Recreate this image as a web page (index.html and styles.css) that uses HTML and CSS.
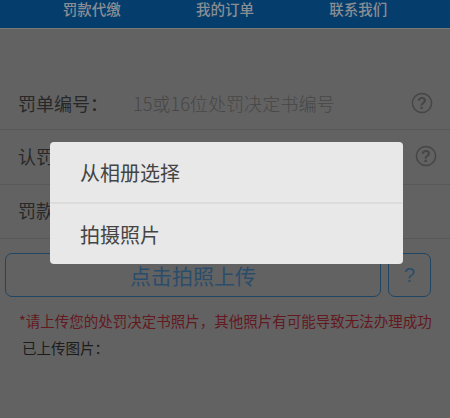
FILE: index.html
```html
<!DOCTYPE html>
<html lang="zh-CN">
<head>
<meta charset="utf-8">
<title>罚款代缴</title>
<link rel="stylesheet" href="styles.css">
</head>
<body>
<div class="page">
  <nav class="nav">
    <span class="nav-item">罚款代缴</span>
    <span class="nav-item">我的订单</span>
    <span class="nav-item">联系我们</span>
  </nav>
  <div class="form">
    <div class="row row-first">
      <span class="label">罚单编号：</span>
      <span class="placeholder">15或16位处罚决定书编号</span>
      <svg class="help" viewBox="0 0 22 22"><circle cx="11" cy="11" r="9.6"/><text x="11" y="16.5" text-anchor="middle" class="help-mark">?</text></svg>
    </div>
    <div class="row row-second">
      <span class="label">认罚人姓名：</span>
      <svg class="help" viewBox="0 0 22 22"><circle cx="11" cy="11" r="9.6"/><text x="11" y="16.5" text-anchor="middle" class="help-mark">?</text></svg>
    </div>
    <div class="row row-third">
      <span class="label">罚款金额：</span>
    </div>
  </div>
  <div class="actions">
    <div class="btn btn-main">点击拍照上传</div>
    <div class="btn btn-help">?</div>
  </div>
  <p class="warn">*请上传您的处罚决定书照片，其他照片有可能导致无法办理成功</p>
  <p class="uploaded">已上传图片：</p>
</div>
<div class="dialog">
  <div class="dialog-item">从相册选择</div>
  <div class="dialog-item dialog-item-last">拍摄照片</div>
</div>
</body>
</html>
```

FILE: styles.css
```css
* { box-sizing: border-box; }
html, body { margin: 0; padding: 0; }
body {
  width: 450px;
  height: 418px;
  overflow: hidden;
  position: relative;
  background: #626262;
  font-family: "Noto Sans CJK SC", "Liberation Sans", sans-serif;
  color: #1c1c1c;
}
.nav {
  height: 29px;
  background: #053e6c;
  border-bottom: 1px solid #787878;
  display: grid;
  grid-template-columns: repeat(3, 133.3px);
  justify-content: center;
  align-items: start;
  text-align: center;
  padding-top: 1px;
}
.nav-item {
  font-size: 14.5px;
  font-weight: 500;
  line-height: 15px;
  color: #8a8e94;
}
.form { display: flex; flex-direction: column; }
.row {
  display: flex;
  align-items: center;
  padding: 0 17px 0 18px;
  border-bottom: 1px solid #585858;
}
.row-first { height: 101px; padding-top: 47px; }
.row-second { height: 55px; padding-right: 13px; padding-bottom: 2px; }
.row-third { height: 54px; padding-bottom: 3px; }
.label { font-size: 18px; width: 115px; flex: none; white-space: nowrap; color: #282828; }
.placeholder { font-size: 18.1px; font-weight: 300; color: #474747; white-space: nowrap; }
.help { width: 22px; height: 22px; margin-left: auto; flex: none; }
.help circle { fill: none; stroke: #464646; stroke-width: 1.5; }
.help-mark { font-size: 16px; font-weight: 700; fill: #464646; font-family: "Liberation Sans", sans-serif; }
.actions {
  display: flex;
  gap: 7px;
  padding: 14px 19px 0 5px;
}
.btn {
  height: 44px;
  border: 1.5px solid #1e4564;
  border-radius: 7px;
  display: flex;
  align-items: center;
  justify-content: center;
  color: #2a4d6c;
}
.btn-main { flex: 1; font-size: 21px; }
.btn-help { width: 43px; font-size: 20px; font-family: "Liberation Sans", sans-serif; }
.warn {
  margin: 14px 0 0 19px;
  font-size: 14.5px;
  line-height: 20px;
  color: #641820;
  white-space: nowrap;
}
.uploaded {
  margin: 7px 0 0 22px;
  font-size: 14.5px;
  line-height: 20px;
  color: #1c1c1c;
}
.dialog {
  position: absolute;
  left: 50px;
  top: 142px;
  width: 353px;
  height: 122px;
  background: #e8e8e8;
  border-radius: 4px;
  display: flex;
  flex-direction: column;
}
.dialog-item {
  flex: 1;
  display: flex;
  align-items: center;
  padding-left: 30px;
  font-size: 20px;
  color: #444444;
  border-bottom: 2px solid #dcdcdc;
}
.dialog-item-last { border-bottom: 0; }
```
